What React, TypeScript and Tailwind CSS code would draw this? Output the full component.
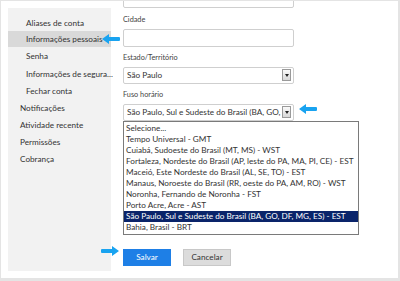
const font = { fontFamily: '"Lato", "Noto Sans", sans-serif' };

function Arrow({ className }: { className: string }) {
  return (
    <svg className={`absolute ${className}`} width="18" height="10" viewBox="0 0 18 10">
      <path d="M0 5 L7 0 L7 3 L17 3 Q18 3 18 4 L18 6 Q18 7 17 7 L7 7 L7 10 Z" fill="#19a3f0" />
    </svg>
  );
}

function DropBtn() {
  return (
    <span className="flex h-[12px] w-[9px] shrink-0 items-center justify-center border border-[#9a9a9a] bg-gradient-to-b from-[#fafafa] to-[#d8d8d8]">
      <span className="h-0 w-0 border-x-[2px] border-t-[3px] border-x-transparent border-t-[#222]" />
    </span>
  );
}

const zones = [
  "Selecione...",
  "Tempo Universal - GMT",
  "Cuiabá, Sudoeste do Brasil (MT, MS) - WST",
  "Fortaleza, Nordeste do Brasil (AP, leste do PA, MA, PI, CE) - EST",
  "Maceió, Este Nordeste do Brasil (AL, SE, TO) - EST",
  "Manaus, Noroeste do Brasil (RR, oeste do PA, AM, RO) - WST",
  "Noronha, Fernando de Noronha - FST",
  "Porto Acre, Acre - AST",
  "São Paulo, Sul e Sudeste do Brasil (BA, GO, DF, MG, ES) - EST",
  "Bahia, Brasil - BRT",
];

export default function App() {
  return (
    <div
      className="relative h-[281px] w-[400px] overflow-hidden border-b-[3px] border-l border-r-2 border-t border-[#e4e4e4] bg-white text-[8.2px] text-[#333]"
      style={font}
    >
      <div className="flex h-full pt-[7px]">
        <aside className="ml-[7px] h-[263px] w-[103px] shrink-0 whitespace-nowrap bg-[#f2f2f2] pt-[7px]">
          <div className="flex h-[16px] items-center pl-[18px]">Aliases de conta</div>
          <div className="flex h-[16px] items-center bg-[#d9d9d9] pl-[18px]">Informações pessoais</div>
          <div className="flex h-[18px] items-center pl-[18px]">Senha</div>
          <div className="flex h-[18px] items-center pl-[18px]">Informações de segura...</div>
          <div className="flex h-[17px] items-center pl-[18px]">Fechar conta</div>
          <div className="flex h-[17px] items-center pl-[12px]">Notificações</div>
          <div className="flex h-[17px] items-center pl-[12px]">Atividade recente</div>
          <div className="flex h-[17px] items-center pl-[12px]">Permissões</div>
          <div className="flex h-[17px] items-center pl-[12px]">Cobrança</div>
        </aside>

        <main className="relative ml-[12px] flex-1">
          <div className="-mt-[9px] h-[9px] w-[171px] rounded-b-[2px] border border-[#cfcfcf]" />
          <div className="mt-[7px] text-[7.3px] text-[#444]">Cidade</div>
          <div className="mt-[3px] h-[18px] w-[171px] rounded-[2px] border border-[#cfcfcf]" />
          <div className="mt-[6px] text-[7.3px] text-[#444]">Estado/Território</div>
          <div className="mt-[3px] flex h-[17px] w-[171px] items-center justify-between rounded-[2px] border border-[#cfcfcf] pl-[3px] pr-[2px]">
            <span>São Paulo</span>
            <DropBtn />
          </div>
          <div className="mt-[6px] text-[7.3px] text-[#444]">Fuso horário</div>
          <div className="mt-[3px] flex h-[17px] w-[171px] items-center justify-between rounded-[2px] border border-[#cfcfcf] pl-[3px] pr-[2px]">
            <span className="overflow-hidden whitespace-nowrap">São Paulo, Sul e Sudeste do Brasil (BA, GO, DF</span>
            <DropBtn />
          </div>
          <ul className="w-[236px] border border-[#7a7a7a] bg-white py-[1px]">
            {zones.map((z) => (
              <li
                key={z}
                className={`flex h-[11px] items-center whitespace-nowrap pl-[2px] ${
                  z.startsWith("São") ? "bg-[#0a246a] text-white" : ""
                }`}
              >
                {z}
              </li>
            ))}
          </ul>
          <div className="mt-[14px] flex gap-[12px]">
            <button className="h-[17px] w-[48px] bg-[#1e7fe6] text-white">Salvar</button>
            <button className="h-[17px] w-[48px] border border-[#c8c8c8] bg-[#dcdcdc] text-[#333]">Cancelar</button>
          </div>
        </main>
      </div>

      <Arrow className="left-[101px] top-[33px]" />
      <Arrow className="left-[298px] top-[103px]" />
      <Arrow className="left-[100px] top-[245px] rotate-180" />
    </div>
  );
}
